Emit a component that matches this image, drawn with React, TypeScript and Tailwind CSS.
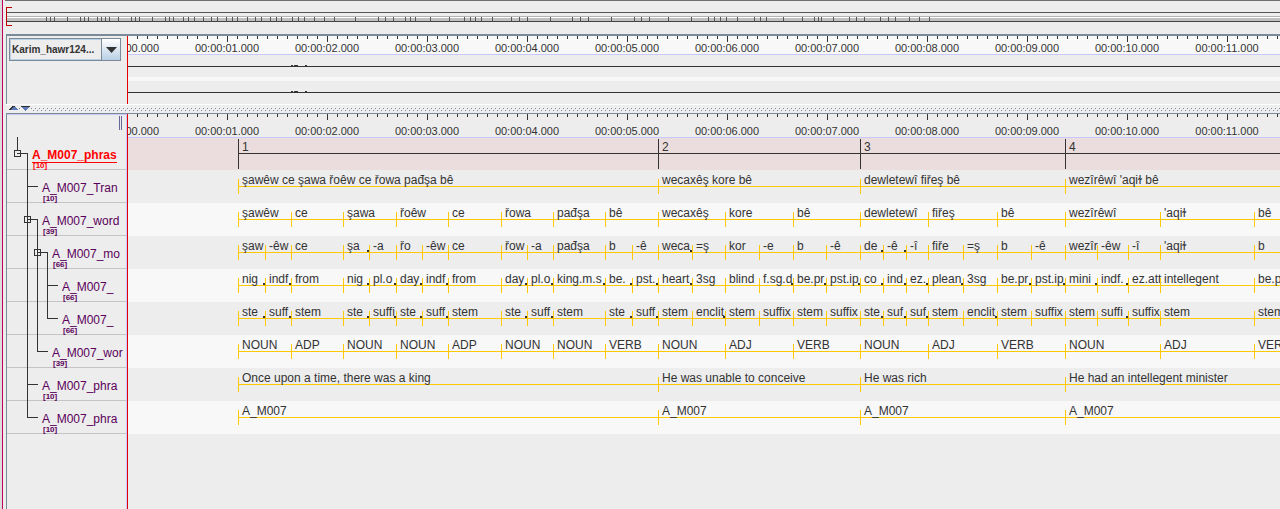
import React from "react";

type Segment = { at: number; text: string; more?: boolean };

type Tier = {
  name: string;
  count: number;
  indent: string;
  active?: boolean;
  segments: Segment[];
};

const PHRASES = [110, 530, 732, 937];
const WORDS = [110, 163, 215, 268, 320, 373, 425, 477, 530, 597, 665, 732, 800, 869, 937, 1032, 1126];
const MORPHS = [
  110, 137, 163, 215, 241, 268, 294, 320, 373, 399, 425, 477, 504, 530, 564, 597, 631, 665, 698, 732, 755, 778, 800,
  835, 869, 903, 937, 969, 1000, 1032, 1126,
];

// A trailing "~" marks a value that is cut off in its segment.
function build(starts: number[], values: string): Segment[] {
  return values.split("|").map((value, i) => ({
    at: starts[i],
    text: value.replace("~", ""),
    more: value.endsWith("~"),
  }));
}

const TIERS: Tier[] = [
  { name: "A_M007_phras", count: 10, indent: "pl-[25px]", active: true, segments: build(PHRASES, "1|2|3|4") },
  {
    name: "A_M007_Tran",
    count: 10,
    indent: "pl-[35px]",
    segments: build(PHRASES, "şawêw ce şawa řoêw ce řowa pađşa bê|wecaxêş kore bê|dewletewî fiřeş bê|wezîrêwî 'aqiɫ bê"),
  },
  {
    name: "A_M007_word",
    count: 39,
    indent: "pl-[35px]",
    segments: build(WORDS, "şawêw|ce|şawa|řoêw|ce|řowa|pađşa|bê|wecaxêş|kore|bê|dewletewî|fiřeş|bê|wezîrêwî|'aqiɫ|bê"),
  },
  {
    name: "A_M007_mo",
    count: 66,
    indent: "pl-[45px]",
    segments: build(
      MORPHS,
      "şaw|-êw|ce|şa~|-a|řo|-êw|ce|řow|-a|pađşa|b|-ê|weca~|=ş|kor|-e|b|-ê|de~|-ê~|-î|fiře|=ş|b|-ê|wezîr|-êw|-î|'aqiɫ|b",
    ),
  },
  {
    name: "A_M007_",
    count: 66,
    indent: "pl-[55px]",
    segments: build(
      MORPHS,
      "nig~|indf~|from|nig~|pl.o~|day~|indf~|from|day~|pl.o~|king.m.s~|be.~|pst.~|heart~|3sg|blind|f.sg.d~|be.pr~|pst.ip~|co~|ind~|ez.~|plean~|3sg|be.pr~|pst.ip~|mini~|indf.~|ez.att|intellegent|be.pr",
    ),
  },
  {
    name: "A_M007_",
    count: 66,
    indent: "pl-[55px]",
    segments: build(
      MORPHS,
      "ste~|suff~|stem|ste~|suffi~|ste~|suff~|stem|ste~|suff~|stem|ste~|suff~|stem|enclit~|stem|suffix|stem|suffix|ste~|suf~|suf~|stem|enclit~|stem|suffix|stem|suffi~|suffix|stem|stem",
    ),
  },
  {
    name: "A_M007_wor",
    count: 39,
    indent: "pl-[45px]",
    segments: build(WORDS, "NOUN|ADP|NOUN|NOUN|ADP|NOUN|NOUN|VERB|NOUN|ADJ|VERB|NOUN|ADJ|VERB|NOUN|ADJ|VERB"),
  },
  {
    name: "A_M007_phra",
    count: 10,
    indent: "pl-[35px]",
    segments: build(
      PHRASES,
      "Once upon a time, there was a king|He was unable to conceive|He was rich|He had an intellegent minister",
    ),
  },
  {
    name: "A_M007_phra",
    count: 10,
    indent: "pl-[35px]",
    segments: build(PHRASES, "A_M007|A_M007|A_M007|A_M007"),
  },
];

const DENSITY = [
  46, 50, 54, 67, 80, 84, 88, 97, 101, 105, 109, 118, 131, 135, 139, 152, 165, 169, 173, 183, 188, 194, 203, 211, 217,
  226, 232, 237, 247, 255, 261, 270, 276, 281, 292, 298, 304, 314, 324, 334, 355, 378, 385, 393, 405, 410, 415, 430,
  449, 464, 470, 475, 481, 492, 511, 519, 527, 550, 572, 580, 588, 611, 634, 641, 649, 668, 691, 708, 714, 720, 726,
  737, 754, 760, 766, 783, 802, 814, 818, 821, 833, 849, 856, 864, 880, 888, 895, 909, 919, 929,
];

function DensityBar() {
  return (
    <div className="-ml-px flex h-[34px] flex-col border-t border-[#6e6e6e] pt-1.5">
      <svg width="100%" height="19" className="block" shapeRendering="crispEdges" aria-label="Annotation density">
        <rect x="2" y="5" width="100%" height="1" fill="#555555" />
        <rect x="2" y="9" width="100%" height="1" fill="#b4b4b4" />
        <rect x="2" y="10" width="100%" height="1" fill="#ffffff" />
        <rect x="2" y="11" width="100%" height="3" fill="#c0c0c0" />
        <rect x="2" y="14" width="100%" height="1" fill="#444444" />
        {DENSITY.map((x) => (
          <rect key={x} x={x - 5} y="10" width="1" height="4" fill="#555555" />
        ))}
        <path d="M1 0h6v1H2v17h5v1H1z" fill="#c00000" />
      </svg>
    </div>
  );
}

function Ruler({ lower = false }: { lower?: boolean }) {
  return (
    <div
      className={
        lower
          ? "flex h-[23px] flex-col justify-between overflow-hidden"
          : "flex h-[19px] flex-col justify-between overflow-hidden border-b border-[#c8c8ff] bg-[#f8f8f8]"
      }
    >
      <div className="flex h-1.5 items-start">
        {Array.from({ length: 400 }, (_, i) => (
          <span
            key={i}
            className={`w-2.5 shrink-0 border-r border-[#333] ${(i + 1) % 10 === 0 ? "h-1.5" : "h-[3px]"}`}
          />
        ))}
      </div>
      <div className="-ml-[51px] flex text-[11px] leading-3">
        {Array.from({ length: 41 }, (_, i) => (
          <span key={i} className="w-[100px] shrink-0 text-center">
            {`00:00:${String(i).padStart(2, "0")}.000`}
          </span>
        ))}
      </div>
    </div>
  );
}

function Channel() {
  return (
    <svg width="100%" height="22" className="block" shapeRendering="crispEdges" aria-label="Audio channel">
      <rect y="11" width="100%" height="1" fill="#333" />
      <path d="M163 10h2v1h-2zM166 10h4v1h-4zM177 10h2v1h-2z" fill="#333" />
    </svg>
  );
}

function TrackRow({ tier, index }: { tier: Tier; index: number }) {
  const bg = tier.active
    ? "bg-[#ebdddd] border-t border-[#c8c8ff]"
    : index % 2 === 0
      ? "bg-[#f8f8f8] border-t border-[#f8f8f8]"
      : "bg-[#ededed] border-t border-[#ededed]";
  const mark = tier.active ? "bg-[#333]" : "bg-[#ffc800]";
  return (
    <div className={`flex h-[33px] overflow-hidden pl-[110px] ${bg}`}>
      {tier.segments.map((s, i) => {
        const next = tier.segments[i + 1];
        return (
          <div
            key={s.at}
            className={`relative flex h-8 pt-px ${next ? "shrink-0" : "min-w-0 flex-1"}`}
            style={next ? { width: next.at - s.at } : undefined}
          >
            <span className={`absolute left-0 w-px ${mark} ${tier.active ? "top-px h-[30px]" : "top-2 h-[15px]"}`} />
            <span className={`absolute inset-x-0 top-[15px] h-px ${mark}`} />
            <span className="relative ml-1 min-w-0 flex-1 text-xs/4 whitespace-nowrap">{s.text}</span>
            {s.more && <span className="absolute top-[13px] right-0 size-0.5 bg-[#333]" />}
          </div>
        );
      })}
    </div>
  );
}

function TreeLines() {
  return (
    <svg
      width="60"
      height="297"
      className="pointer-events-none absolute top-0 left-0"
      fill="none"
      stroke="#333"
      shapeRendering="crispEdges"
      aria-hidden="true"
    >
      <path d="M10.5 0V13M10 16.5H20.5V280.5H31M20 49.5H31M20 247.5H31" />
      <path d="M20 82.5H30.5V214.5H41M30 115.5H40.5V181.5H51M40 148.5H51" />
      <path d="M7.5 13.5h6v6h-6zM17.5 79.5h6v6h-6zM27.5 112.5h6v6h-6z" />
    </svg>
  );
}

function SplitBar() {
  return (
    <div className="h-[9px] border-t border-white" role="separator" aria-orientation="horizontal">
      <svg width="100%" height="8" className="block" shapeRendering="crispEdges">
        <defs>
          <pattern id="bumps" width="4" height="8" patternUnits="userSpaceOnUse">
            <path d="M0 2h1v1H0zM2 4h1v1H2z" fill="#fff" />
            <path d="M1 3h1v1H1zM3 5h1v1H3z" fill="#7a8a99" />
          </pattern>
        </defs>
        <rect x="13" width="2" height="8" fill="url(#bumps)" />
        <rect x="25" width="100%" height="8" fill="url(#bumps)" />
        <path d="M3 5h10L8 1z" fill="#5b78b8" />
        <path d="M3 4h1V3h1V2h1V1h3v1H7v1H6v1H5v1H3z" fill="#333" />
        <path d="M15 1h9L19.5 6z" fill="#5b78b8" />
        <path d="M15 1h9v1h-9z" fill="#333" />
      </svg>
    </div>
  );
}

export default function App() {
  return (
    <div className="flex min-h-screen overflow-hidden bg-[#ededed] font-['Liberation_Sans',Arial,sans-serif] text-[#333]">
      <div className="w-[3px] shrink-0 border-r border-[#c0005a] bg-[#dcdcdc]" />
      <main className="flex min-w-0 flex-1 flex-col pl-[3px]">
        <DensityBar />

        <section className="flex border-t-2 border-[#7a8a99]">
          <div className="w-[121px] shrink-0 border-l border-[#7a8a99] pt-0.5 pl-0.5">
            <div className="relative flex h-[23px] w-28 border border-[#7a8a99]">
              <label htmlFor="media" className="sr-only">
                Media file
              </label>
              <select
                id="media"
                className="w-full appearance-none border border-[#b8cfe5] pl-px text-[10px] leading-3 font-bold outline-none"
              >
                <option>Karim_hawr124...</option>
              </select>
              <span className="pointer-events-none absolute inset-y-0 right-0 flex w-[19px] items-center justify-center border-l border-[#7a8a99] bg-linear-to-b from-white to-[#b8cfe5]">
                <svg width="11" height="6" viewBox="0 0 11 6" aria-hidden="true">
                  <path d="M0 0H11L5.5 6z" fill="#333" />
                </svg>
              </span>
            </div>
          </div>
          <div className="min-w-0 flex-1 border-l border-[#e60000]">
            <Ruler />
            <Channel />
            <div className="h-1 bg-[#f8f8f8]" />
            <Channel />
            <div className="h-px" />
          </div>
        </section>

        <SplitBar />

        <section className="flex flex-1 border-t border-[#7a8a99]">
          <div className="w-[121px] shrink-0 overflow-hidden border-r border-l border-r-[#c8c8ff] border-l-[#7a8a99]">
            <div className="flex h-[23px] justify-end border-t border-[#c8c8ff] pt-px pr-1">
              <span className="h-3.5 w-[3px] border-x border-[#666699]" />
            </div>
            <div className="relative">
              <TreeLines />
              {TIERS.map((tier, i) => (
                <div
                  key={i}
                  className={`h-[33px] border-b border-[#c4c4c4] pt-[11px] ${tier.indent} ${
                    tier.active ? "text-[#ff0000]" : "text-[#5a005a]"
                  }`}
                >
                  <div
                    className={`h-[15px] w-fit border-b text-xs leading-[14px] whitespace-nowrap ${
                      tier.active ? "border-[#ff0000] font-bold" : "border-transparent"
                    }`}
                  >
                    {tier.name}
                  </div>
                  <div className="ml-px text-[8px] leading-[5px] font-bold">[{tier.count}]</div>
                </div>
              ))}
            </div>
          </div>
          <div className="min-w-0 flex-1 border-l border-[#e60000]">
            <Ruler lower />
            {TIERS.map((tier, i) => (
              <TrackRow key={i} tier={tier} index={i} />
            ))}
          </div>
        </section>
      </main>
    </div>
  );
}
